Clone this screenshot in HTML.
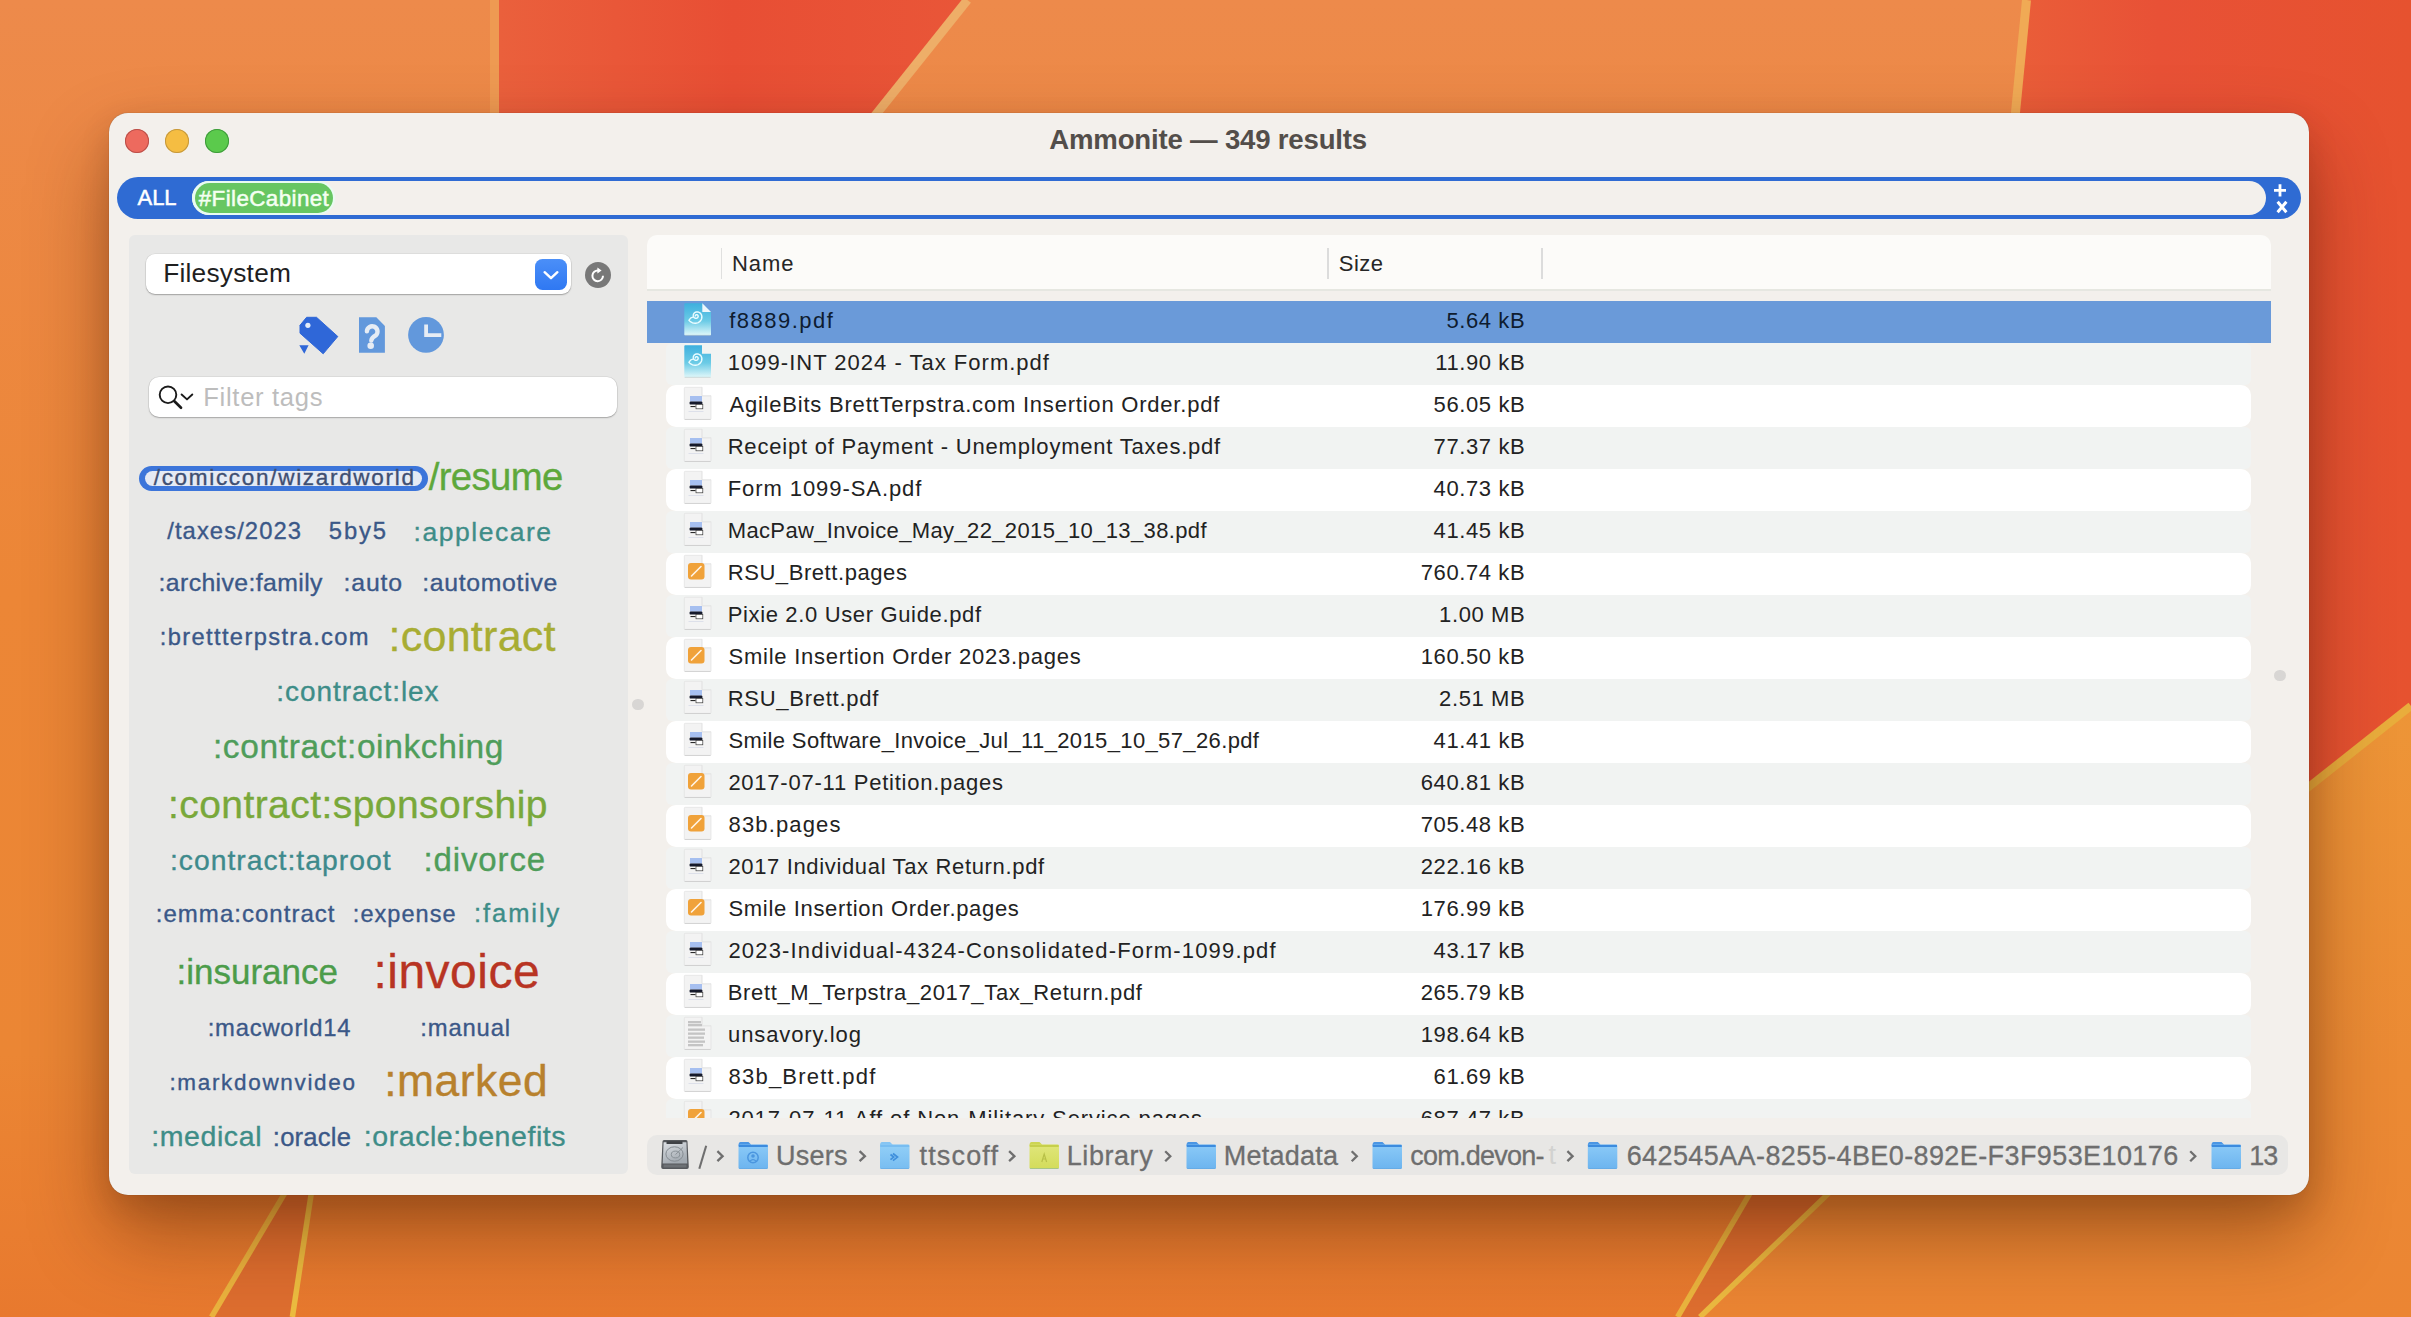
<!DOCTYPE html>
<html><head><meta charset="utf-8">
<style>
html,body{margin:0;padding:0}
html{width:2411px;height:1317px;overflow:hidden}
body{width:2411px;height:1317px;overflow:hidden;position:relative;font-family:"Liberation Sans",sans-serif;background:#ec8a42}
.a{position:absolute}
.t{position:absolute;white-space:pre;line-height:1}
.row{position:absolute}
.ic{position:absolute;overflow:visible}
</style></head><body>
<svg class="a" style="left:0;top:0" width="2411" height="1317" viewBox="0 0 2411 1317">
  <defs>
    <linearGradient id="bgL" x1="0" y1="0" x2="0" y2="1">
      <stop offset="0" stop-color="#ed8a4b"/><stop offset="0.45" stop-color="#ec8636"/><stop offset="0.8" stop-color="#eb8634"/><stop offset="1" stop-color="#e8792e"/>
    </linearGradient>
    <linearGradient id="redT" x1="0" y1="0" x2="1" y2="0">
      <stop offset="0" stop-color="#ea603c"/><stop offset="0.5" stop-color="#e84e34"/><stop offset="1" stop-color="#e95638"/>
    </linearGradient>
    <linearGradient id="redR" x1="0" y1="0" x2="1" y2="0">
      <stop offset="0" stop-color="#ea6039"/><stop offset="0.4" stop-color="#e85136"/><stop offset="1" stop-color="#e6522f"/>
    </linearGradient>
    <linearGradient id="orR" x1="0" y1="0" x2="0" y2="1"><stop offset="0" stop-color="#ed9537"/><stop offset="0.6" stop-color="#eb8a34"/><stop offset="1" stop-color="#eb8533"/></linearGradient>
    <linearGradient id="botG" x1="0" y1="0" x2="0" y2="1">
      <stop offset="0" stop-color="#e98030"/><stop offset="1" stop-color="#ea7e30"/>
    </linearGradient>
  </defs>
  <rect x="0" y="0" width="2411" height="1317" fill="url(#bgL)"/>
  <!-- top red block -->
  <polygon points="499,0 967,0 790,230 499,230" fill="url(#redT)"/>
  <line x1="494.5" y1="0" x2="494.5" y2="230" stroke="#ee9a52" stroke-width="9"/>
  <line x1="967.4" y1="0" x2="790" y2="222" stroke="#eeae68" stroke-width="9"/>
  <!-- right red block -->
  <polygon points="2027,0 2411,0 2411,706 2200,873 1990,873 2012,113" fill="url(#redR)"/>
  <line x1="2026.5" y1="0" x2="2004" y2="230" stroke="#f0aa55" stroke-width="9"/>
  <polygon points="2411,706 2411,1317 1700,1317 1873.6,1150 2200,873" fill="url(#orR)"/>
  <line x1="2411" y1="706" x2="2200" y2="873" stroke="#e9ad3c" stroke-width="8"/>
  <!-- bottom wedges -->
  <polygon points="310.3,1150 317.9,1150 292.4,1317 211.5,1317" fill="#de6e2f"/>
  <line x1="310.3" y1="1150" x2="211.5" y2="1317" stroke="#ebb33e" stroke-width="5.5"/>
  <line x1="317.9" y1="1150" x2="292.4" y2="1317" stroke="#edbd40" stroke-width="5.5"/>
  <polygon points="1775.3,1150 1873.6,1150 1700,1317 1677.6,1317" fill="#de6e2f"/>
  <line x1="1775.3" y1="1150" x2="1677.6" y2="1317" stroke="#ebb53e" stroke-width="5.5"/>
  <line x1="1873.6" y1="1150" x2="1700" y2="1317" stroke="#ecba40" stroke-width="5.5"/>
</svg>
<!-- window shadow and window -->
<div class="a" style="left:109px;top:113px;width:2200px;height:1082px;border-radius:19px;box-shadow:0 40px 80px rgba(70,25,0,0.42),0 12px 30px rgba(70,25,0,0.16),0 0 1px rgba(0,0,0,.45);background:#f3f0ec"></div>

<!-- traffic lights -->
<div class="a" style="left:125px;top:128.7px;width:24px;height:24px;border-radius:50%;background:#ed6a5e;box-shadow:inset 0 0 0 1px #b9504a"></div>
<div class="a" style="left:165px;top:128.7px;width:24px;height:24px;border-radius:50%;background:#f5bd42;box-shadow:inset 0 0 0 1px #c4983e"></div>
<div class="a" style="left:204.8px;top:128.7px;width:24px;height:24px;border-radius:50%;background:#5bca4c;box-shadow:inset 0 0 0 1px #3f9a3c"></div>

<!-- search bar -->
<div class="a" style="left:117px;top:177px;width:2184px;height:42px;border-radius:21px;background:#2f6bd3"></div>
<div class="a" style="left:192px;top:181px;width:2074px;height:34px;border-radius:17px;background:#f3f0ec"></div>
<div class="a" style="left:192px;top:181px;width:143px;height:34px;border-radius:17px;background:#e9fbf2"></div>
<div class="a" style="left:194.5px;top:183px;width:138px;height:30px;border-radius:15px;background:#67c662"></div>
<svg class="a" style="left:2270px;top:182px" width="22" height="34" viewBox="0 0 22 34">
  <path d="M10,2.3 V14.4 M4,8.4 H16" stroke="#fff" stroke-width="2.8"/>
  <path d="M7.6,19.8 L16.4,30.2 M16.4,19.8 L7.6,30.2" stroke="#fff" stroke-width="3"/>
</svg>

<!-- left panel -->
<div class="a" style="left:129px;top:235px;width:499px;height:939px;border-radius:6px;background:#e8e8e7"></div>
<div class="a" style="left:146px;top:254px;width:425px;height:40px;border-radius:9px;background:#ffffff;box-shadow:0 1px 1.5px rgba(0,0,0,0.28),0 0 0 0.5px rgba(0,0,0,0.08)"></div>
<div class="a" style="left:535px;top:259px;width:32px;height:30.5px;border-radius:7.5px;background:linear-gradient(#4b8ff8,#2f78f2)"></div>
<svg class="a" style="left:535px;top:259px" width="32" height="31" viewBox="0 0 32 31">
  <path d="M9.6,13.2 L16,19.2 L22.4,13.2" fill="none" stroke="#fff" stroke-width="2.4" stroke-linecap="round" stroke-linejoin="round"/>
</svg>
<svg class="a" style="left:584px;top:261px" width="28" height="28" viewBox="0 0 28 28">
  <circle cx="14" cy="14" r="13" fill="#787878"/>
  <path d="M19,14.8 A5.3,5.3 0 1 1 14.2,9.6" fill="none" stroke="#fff" stroke-width="2"/>
  <path d="M13.4,6.6 L17.6,9.6 L13.4,12.4 Z" fill="#fff"/>
</svg>
<!-- three icons -->
<svg class="a" style="left:290px;top:308px" width="160" height="54" viewBox="290 308 160 54">
  <path d="M300,325.3 L306.6,317.3 L316.5,317.3 L337.8,336.5 L323.2,353.8 L300,333.2 Z" fill="#2f67d8" stroke="#2f67d8" stroke-width="1" stroke-linejoin="round"/>
  <circle cx="307.9" cy="325.3" r="2.6" fill="#e4ecf8"/>
  <path d="M299.3,345.2 L308.6,345.2 L304.3,353.8 Z" fill="#2f67d8"/>
  <path d="M359,317.3 H376.3 L384.9,325.9 V352.8 H359 Z" fill="#6298dc"/>
  <path d="M366.9,331.3 A5.3,5.3 0 1 1 376,335.2 Q371.6,337.4 371.3,340.6" fill="none" stroke="#e6ecf4" stroke-width="4.4" stroke-linecap="round"/>
  <circle cx="370.7" cy="345.8" r="3.3" fill="#e6ecf4"/>
  <circle cx="426" cy="334.9" r="17.9" fill="#6298dc"/>
  <path d="M426.1,324.6 V335.2 H441.3" fill="none" stroke="#e6ecf4" stroke-width="3.8"/>
</svg>
<!-- filter field -->
<div class="a" style="left:148.5px;top:377px;width:468.5px;height:40px;border-radius:10px;background:#ffffff;box-shadow:0 1px 1.5px rgba(0,0,0,0.25),0 0 0 0.5px rgba(0,0,0,0.1)"></div>
<svg class="a" style="left:150px;top:380px" width="50" height="36" viewBox="150 380 50 36">
  <circle cx="168" cy="394.8" r="8.3" fill="none" stroke="#1a1a1a" stroke-width="1.9"/>
  <path d="M174.4,401.2 L181,407.8" stroke="#1a1a1a" stroke-width="2.7" stroke-linecap="round"/>
  <path d="M181.6,394.5 L187,399.4 L192.3,394.5" fill="none" stroke="#1a1a1a" stroke-width="1.9" stroke-linecap="round" stroke-linejoin="round"/>
</svg>
<!-- wizardworld pill -->
<div class="a" style="left:138.7px;top:465.6px;width:289.3px;height:25.5px;border-radius:13px;background:#3c75da"></div>
<div class="a" style="left:144.5px;top:471px;width:277.5px;height:14.5px;border-radius:8px;background:#e5eaf4"></div>

<!-- split handles -->
<div class="a" style="left:632.3px;top:698.8px;width:11.5px;height:11.5px;border-radius:50%;background:#d8d6d4"></div>
<div class="a" style="left:2274.2px;top:669.8px;width:11.5px;height:11.5px;border-radius:50%;background:#d8d6d4"></div>

<!-- list header -->
<div class="a" style="left:647px;top:235px;width:1624px;height:54px;border-radius:10px 10px 0 0;background:#fcfbf9"></div>
<div class="a" style="left:647px;top:289px;width:1624px;height:2px;background:#e6e7e1"></div>
<div class="a" style="left:720.6px;top:248px;width:1.8px;height:31px;background:#e0e0df"></div>
<div class="a" style="left:1327px;top:248px;width:2px;height:31px;background:#dcdcdc"></div>
<div class="a" style="left:1541px;top:248px;width:2px;height:31px;background:#dcdcdc"></div>

<!-- list rows (clipped) -->
<div class="a" style="left:0;top:0;width:2411px;height:1118px;overflow:hidden">
<div class="row" style="left:647px;top:301px;width:1624px;height:42px;background:#6a9ad9"></div>
<svg class="ic" style="left:683.0px;top:301.9px" width="29" height="35" viewBox="-1 -1 29 35"><defs><linearGradient id="amg302" x1="0" y1="0" x2="0" y2="1"><stop offset="0" stop-color="#3eb0de"/><stop offset="0.55" stop-color="#6ccbe6"/><stop offset="1" stop-color="#e2f8fa"/></linearGradient></defs><path d="M0.3,1.2 Q0.3,0.3 1.2,0.3 H18.3 L27,9 V31.6 Q27,32.5 26.1,32.5 H1.2 Q0.3,32.5 0.3,31.6 Z" fill="url(#amg302)"/><rect x="0.6" y="31.8" width="26" height="1" fill="#000" opacity="0.12"/><path d="M18.3,0.3 L27,9 H18.3 Z" fill="#eef6fb"/><path d="M11.41,12.90 L11.40,12.77 L11.42,12.65 L11.45,12.52 L11.49,12.40 L11.55,12.28 L11.62,12.17 L11.71,12.06 L11.82,11.96 L11.94,11.88 L12.07,11.81 L12.21,11.75 L12.36,11.71 L12.51,11.68 L12.68,11.68 L12.84,11.69 L13.01,11.73 L13.17,11.78 L13.33,11.86 L13.48,11.95 L13.62,12.07 L13.76,12.21 L13.87,12.36 L13.97,12.53 L14.05,12.71 L14.11,12.91 L14.15,13.12 L14.16,13.33 L14.14,13.55 L14.10,13.77 L14.03,13.99 L13.93,14.20 L13.81,14.40 L13.66,14.60 L13.48,14.77 L13.28,14.93 L13.06,15.07 L12.82,15.18 L12.56,15.26 L12.29,15.31 L12.01,15.33 L11.72,15.32 L11.42,15.27 L11.13,15.18 L10.85,15.06 L10.58,14.90 L10.32,14.71 L10.08,14.48 L9.87,14.22 L9.68,13.93 L9.53,13.61 L9.42,13.27 L9.34,12.91 L9.31,12.54 L9.32,12.15 L9.38,11.77 L9.48,11.38 L9.64,11.00 L9.84,10.64 L10.09,10.29 L10.39,9.97 L10.73,9.68 L11.11,9.43 L11.52,9.22 L11.97,9.06 L12.44,8.95 L12.94,8.90 L13.44,8.90 L13.96,8.97 L14.47,9.10 L14.97,9.30 L15.46,9.56 L15.93,9.88 L16.36,10.26 L16.75,10.70 L17.09,11.20 L17.38,11.74 L17.60,12.33 L17.76,12.96 L17.84,13.61 L17.84,14.28 L17.77,14.96 L17.61,15.64 L17.36,16.31 L17.03,16.96 L16.62,17.58 L16.12,18.16 L15.54,18.69 L14.90,19.16 L14.18,19.55 L13.41,19.86 L12.59,20.08 L11.73,20.21 L10.85,20.23 L9.94,20.15 L9.04,19.95 L8.14,19.64 L7.27,19.22 L6.44,18.69 L5.66,18.05 L4.95,17.30 Q6.15,14.50 9.45,13.90" fill="none" stroke="#eafcff" stroke-width="1.45" stroke-linecap="round" stroke-linejoin="round"/></svg>
<div class="row" style="left:666px;top:343px;width:1585px;height:42px;background:#f1f3f2;border-radius:6px"></div>
<svg class="ic" style="left:683.0px;top:343.9px" width="29" height="35" viewBox="-1 -1 29 35"><defs><linearGradient id="amg344" x1="0" y1="0" x2="0" y2="1"><stop offset="0" stop-color="#3eb0de"/><stop offset="0.55" stop-color="#6ccbe6"/><stop offset="1" stop-color="#e2f8fa"/></linearGradient></defs><path d="M0.3,1.2 Q0.3,0.3 1.2,0.3 H18 V8.8 H27 V31.6 Q27,32.5 26.1,32.5 H1.2 Q0.3,32.5 0.3,31.6 Z" fill="url(#amg344)"/><rect x="0.6" y="31.8" width="26" height="1" fill="#000" opacity="0.12"/><path d="M11.41,12.90 L11.40,12.77 L11.42,12.65 L11.45,12.52 L11.49,12.40 L11.55,12.28 L11.62,12.17 L11.71,12.06 L11.82,11.96 L11.94,11.88 L12.07,11.81 L12.21,11.75 L12.36,11.71 L12.51,11.68 L12.68,11.68 L12.84,11.69 L13.01,11.73 L13.17,11.78 L13.33,11.86 L13.48,11.95 L13.62,12.07 L13.76,12.21 L13.87,12.36 L13.97,12.53 L14.05,12.71 L14.11,12.91 L14.15,13.12 L14.16,13.33 L14.14,13.55 L14.10,13.77 L14.03,13.99 L13.93,14.20 L13.81,14.40 L13.66,14.60 L13.48,14.77 L13.28,14.93 L13.06,15.07 L12.82,15.18 L12.56,15.26 L12.29,15.31 L12.01,15.33 L11.72,15.32 L11.42,15.27 L11.13,15.18 L10.85,15.06 L10.58,14.90 L10.32,14.71 L10.08,14.48 L9.87,14.22 L9.68,13.93 L9.53,13.61 L9.42,13.27 L9.34,12.91 L9.31,12.54 L9.32,12.15 L9.38,11.77 L9.48,11.38 L9.64,11.00 L9.84,10.64 L10.09,10.29 L10.39,9.97 L10.73,9.68 L11.11,9.43 L11.52,9.22 L11.97,9.06 L12.44,8.95 L12.94,8.90 L13.44,8.90 L13.96,8.97 L14.47,9.10 L14.97,9.30 L15.46,9.56 L15.93,9.88 L16.36,10.26 L16.75,10.70 L17.09,11.20 L17.38,11.74 L17.60,12.33 L17.76,12.96 L17.84,13.61 L17.84,14.28 L17.77,14.96 L17.61,15.64 L17.36,16.31 L17.03,16.96 L16.62,17.58 L16.12,18.16 L15.54,18.69 L14.90,19.16 L14.18,19.55 L13.41,19.86 L12.59,20.08 L11.73,20.21 L10.85,20.23 L9.94,20.15 L9.04,19.95 L8.14,19.64 L7.27,19.22 L6.44,18.69 L5.66,18.05 L4.95,17.30 Q6.15,14.50 9.45,13.90" fill="none" stroke="#eafcff" stroke-width="1.45" stroke-linecap="round" stroke-linejoin="round"/></svg>
<div class="row" style="left:666px;top:385px;width:1585px;height:42px;background:#ffffff;border-radius:10px"></div>
<svg class="ic" style="left:683.0px;top:385.9px" width="29" height="35" viewBox="-1 -1 29 35"><path d="M0.3,1.2 Q0.3,0.3 1.2,0.3 H18 V8.8 H27 V31.6 Q27,32.5 26.1,32.5 H1.2 Q0.3,32.5 0.3,31.6 Z" fill="#f3f3f3" stroke="#dedede" stroke-width="0.6"/><rect x="0.6" y="31.9" width="26" height="1" fill="#000" opacity="0.10"/><path d="M18,0.3 V8.8 H27" fill="none" stroke="#e4e4e4" stroke-width="0.6"/><rect x="6" y="9" width="12" height="5.6" fill="#a6bff0"/><rect x="5.6" y="14.4" width="12.8" height="3.2" rx="1.2" fill="#15192b"/><rect x="12" y="17.4" width="6.8" height="4.4" fill="#ffffff" stroke="#3a3a3a" stroke-width="0.7"/><rect x="6.5" y="19" width="5" height="1.1" fill="#2a2a2a"/><rect x="4.5" y="24" width="15" height="0.8" fill="#d8dbe8"/></svg>
<div class="row" style="left:666px;top:427px;width:1585px;height:42px;background:#f1f3f2;border-radius:6px"></div>
<svg class="ic" style="left:683.0px;top:427.9px" width="29" height="35" viewBox="-1 -1 29 35"><path d="M0.3,1.2 Q0.3,0.3 1.2,0.3 H18 V8.8 H27 V31.6 Q27,32.5 26.1,32.5 H1.2 Q0.3,32.5 0.3,31.6 Z" fill="#f3f3f3" stroke="#dedede" stroke-width="0.6"/><rect x="0.6" y="31.9" width="26" height="1" fill="#000" opacity="0.10"/><path d="M18,0.3 V8.8 H27" fill="none" stroke="#e4e4e4" stroke-width="0.6"/><rect x="6" y="9" width="12" height="5.6" fill="#a6bff0"/><rect x="5.6" y="14.4" width="12.8" height="3.2" rx="1.2" fill="#15192b"/><rect x="12" y="17.4" width="6.8" height="4.4" fill="#ffffff" stroke="#3a3a3a" stroke-width="0.7"/><rect x="6.5" y="19" width="5" height="1.1" fill="#2a2a2a"/><rect x="4.5" y="24" width="15" height="0.8" fill="#d8dbe8"/></svg>
<div class="row" style="left:666px;top:469px;width:1585px;height:42px;background:#ffffff;border-radius:10px"></div>
<svg class="ic" style="left:683.0px;top:469.9px" width="29" height="35" viewBox="-1 -1 29 35"><path d="M0.3,1.2 Q0.3,0.3 1.2,0.3 H18 V8.8 H27 V31.6 Q27,32.5 26.1,32.5 H1.2 Q0.3,32.5 0.3,31.6 Z" fill="#f3f3f3" stroke="#dedede" stroke-width="0.6"/><rect x="0.6" y="31.9" width="26" height="1" fill="#000" opacity="0.10"/><path d="M18,0.3 V8.8 H27" fill="none" stroke="#e4e4e4" stroke-width="0.6"/><rect x="6" y="9" width="12" height="5.6" fill="#a6bff0"/><rect x="5.6" y="14.4" width="12.8" height="3.2" rx="1.2" fill="#15192b"/><rect x="12" y="17.4" width="6.8" height="4.4" fill="#ffffff" stroke="#3a3a3a" stroke-width="0.7"/><rect x="6.5" y="19" width="5" height="1.1" fill="#2a2a2a"/><rect x="4.5" y="24" width="15" height="0.8" fill="#d8dbe8"/></svg>
<div class="row" style="left:666px;top:511px;width:1585px;height:42px;background:#f1f3f2;border-radius:6px"></div>
<svg class="ic" style="left:683.0px;top:511.9px" width="29" height="35" viewBox="-1 -1 29 35"><path d="M0.3,1.2 Q0.3,0.3 1.2,0.3 H18 V8.8 H27 V31.6 Q27,32.5 26.1,32.5 H1.2 Q0.3,32.5 0.3,31.6 Z" fill="#f3f3f3" stroke="#dedede" stroke-width="0.6"/><rect x="0.6" y="31.9" width="26" height="1" fill="#000" opacity="0.10"/><path d="M18,0.3 V8.8 H27" fill="none" stroke="#e4e4e4" stroke-width="0.6"/><rect x="6" y="9" width="12" height="5.6" fill="#a6bff0"/><rect x="5.6" y="14.4" width="12.8" height="3.2" rx="1.2" fill="#15192b"/><rect x="12" y="17.4" width="6.8" height="4.4" fill="#ffffff" stroke="#3a3a3a" stroke-width="0.7"/><rect x="6.5" y="19" width="5" height="1.1" fill="#2a2a2a"/><rect x="4.5" y="24" width="15" height="0.8" fill="#d8dbe8"/></svg>
<div class="row" style="left:666px;top:553px;width:1585px;height:42px;background:#ffffff;border-radius:10px"></div>
<svg class="ic" style="left:683.0px;top:553.9px" width="29" height="35" viewBox="-1 -1 29 35"><path d="M0.3,1.2 Q0.3,0.3 1.2,0.3 H18 V8.8 H27 V31.6 Q27,32.5 26.1,32.5 H1.2 Q0.3,32.5 0.3,31.6 Z" fill="#f3f3f3" stroke="#dedede" stroke-width="0.6"/><rect x="0.6" y="31.9" width="26" height="1" fill="#000" opacity="0.10"/><path d="M18,0.3 V8.8 H27" fill="none" stroke="#e4e4e4" stroke-width="0.6"/><rect x="4" y="8" width="16.5" height="16.5" rx="3" fill="#f0a23a"/><path d="M7.5,21 L17,11.5" stroke="#fff4e6" stroke-width="1.6" stroke-linecap="round"/></svg>
<div class="row" style="left:666px;top:595px;width:1585px;height:42px;background:#f1f3f2;border-radius:6px"></div>
<svg class="ic" style="left:683.0px;top:595.9px" width="29" height="35" viewBox="-1 -1 29 35"><path d="M0.3,1.2 Q0.3,0.3 1.2,0.3 H18 V8.8 H27 V31.6 Q27,32.5 26.1,32.5 H1.2 Q0.3,32.5 0.3,31.6 Z" fill="#f3f3f3" stroke="#dedede" stroke-width="0.6"/><rect x="0.6" y="31.9" width="26" height="1" fill="#000" opacity="0.10"/><path d="M18,0.3 V8.8 H27" fill="none" stroke="#e4e4e4" stroke-width="0.6"/><rect x="6" y="9" width="12" height="5.6" fill="#a6bff0"/><rect x="5.6" y="14.4" width="12.8" height="3.2" rx="1.2" fill="#15192b"/><rect x="12" y="17.4" width="6.8" height="4.4" fill="#ffffff" stroke="#3a3a3a" stroke-width="0.7"/><rect x="6.5" y="19" width="5" height="1.1" fill="#2a2a2a"/><rect x="4.5" y="24" width="15" height="0.8" fill="#d8dbe8"/></svg>
<div class="row" style="left:666px;top:637px;width:1585px;height:42px;background:#ffffff;border-radius:10px"></div>
<svg class="ic" style="left:683.0px;top:637.9px" width="29" height="35" viewBox="-1 -1 29 35"><path d="M0.3,1.2 Q0.3,0.3 1.2,0.3 H18 V8.8 H27 V31.6 Q27,32.5 26.1,32.5 H1.2 Q0.3,32.5 0.3,31.6 Z" fill="#f3f3f3" stroke="#dedede" stroke-width="0.6"/><rect x="0.6" y="31.9" width="26" height="1" fill="#000" opacity="0.10"/><path d="M18,0.3 V8.8 H27" fill="none" stroke="#e4e4e4" stroke-width="0.6"/><rect x="4" y="8" width="16.5" height="16.5" rx="3" fill="#f0a23a"/><path d="M7.5,21 L17,11.5" stroke="#fff4e6" stroke-width="1.6" stroke-linecap="round"/></svg>
<div class="row" style="left:666px;top:679px;width:1585px;height:42px;background:#f1f3f2;border-radius:6px"></div>
<svg class="ic" style="left:683.0px;top:679.9px" width="29" height="35" viewBox="-1 -1 29 35"><path d="M0.3,1.2 Q0.3,0.3 1.2,0.3 H18 V8.8 H27 V31.6 Q27,32.5 26.1,32.5 H1.2 Q0.3,32.5 0.3,31.6 Z" fill="#f3f3f3" stroke="#dedede" stroke-width="0.6"/><rect x="0.6" y="31.9" width="26" height="1" fill="#000" opacity="0.10"/><path d="M18,0.3 V8.8 H27" fill="none" stroke="#e4e4e4" stroke-width="0.6"/><rect x="6" y="9" width="12" height="5.6" fill="#a6bff0"/><rect x="5.6" y="14.4" width="12.8" height="3.2" rx="1.2" fill="#15192b"/><rect x="12" y="17.4" width="6.8" height="4.4" fill="#ffffff" stroke="#3a3a3a" stroke-width="0.7"/><rect x="6.5" y="19" width="5" height="1.1" fill="#2a2a2a"/><rect x="4.5" y="24" width="15" height="0.8" fill="#d8dbe8"/></svg>
<div class="row" style="left:666px;top:721px;width:1585px;height:42px;background:#ffffff;border-radius:10px"></div>
<svg class="ic" style="left:683.0px;top:721.9px" width="29" height="35" viewBox="-1 -1 29 35"><path d="M0.3,1.2 Q0.3,0.3 1.2,0.3 H18 V8.8 H27 V31.6 Q27,32.5 26.1,32.5 H1.2 Q0.3,32.5 0.3,31.6 Z" fill="#f3f3f3" stroke="#dedede" stroke-width="0.6"/><rect x="0.6" y="31.9" width="26" height="1" fill="#000" opacity="0.10"/><path d="M18,0.3 V8.8 H27" fill="none" stroke="#e4e4e4" stroke-width="0.6"/><rect x="6" y="9" width="12" height="5.6" fill="#a6bff0"/><rect x="5.6" y="14.4" width="12.8" height="3.2" rx="1.2" fill="#15192b"/><rect x="12" y="17.4" width="6.8" height="4.4" fill="#ffffff" stroke="#3a3a3a" stroke-width="0.7"/><rect x="6.5" y="19" width="5" height="1.1" fill="#2a2a2a"/><rect x="4.5" y="24" width="15" height="0.8" fill="#d8dbe8"/></svg>
<div class="row" style="left:666px;top:763px;width:1585px;height:42px;background:#f1f3f2;border-radius:6px"></div>
<svg class="ic" style="left:683.0px;top:763.9px" width="29" height="35" viewBox="-1 -1 29 35"><path d="M0.3,1.2 Q0.3,0.3 1.2,0.3 H18 V8.8 H27 V31.6 Q27,32.5 26.1,32.5 H1.2 Q0.3,32.5 0.3,31.6 Z" fill="#f3f3f3" stroke="#dedede" stroke-width="0.6"/><rect x="0.6" y="31.9" width="26" height="1" fill="#000" opacity="0.10"/><path d="M18,0.3 V8.8 H27" fill="none" stroke="#e4e4e4" stroke-width="0.6"/><rect x="4" y="8" width="16.5" height="16.5" rx="3" fill="#f0a23a"/><path d="M7.5,21 L17,11.5" stroke="#fff4e6" stroke-width="1.6" stroke-linecap="round"/></svg>
<div class="row" style="left:666px;top:805px;width:1585px;height:42px;background:#ffffff;border-radius:10px"></div>
<svg class="ic" style="left:683.0px;top:805.9px" width="29" height="35" viewBox="-1 -1 29 35"><path d="M0.3,1.2 Q0.3,0.3 1.2,0.3 H18 V8.8 H27 V31.6 Q27,32.5 26.1,32.5 H1.2 Q0.3,32.5 0.3,31.6 Z" fill="#f3f3f3" stroke="#dedede" stroke-width="0.6"/><rect x="0.6" y="31.9" width="26" height="1" fill="#000" opacity="0.10"/><path d="M18,0.3 V8.8 H27" fill="none" stroke="#e4e4e4" stroke-width="0.6"/><rect x="4" y="8" width="16.5" height="16.5" rx="3" fill="#f0a23a"/><path d="M7.5,21 L17,11.5" stroke="#fff4e6" stroke-width="1.6" stroke-linecap="round"/></svg>
<div class="row" style="left:666px;top:847px;width:1585px;height:42px;background:#f1f3f2;border-radius:6px"></div>
<svg class="ic" style="left:683.0px;top:847.9px" width="29" height="35" viewBox="-1 -1 29 35"><path d="M0.3,1.2 Q0.3,0.3 1.2,0.3 H18 V8.8 H27 V31.6 Q27,32.5 26.1,32.5 H1.2 Q0.3,32.5 0.3,31.6 Z" fill="#f3f3f3" stroke="#dedede" stroke-width="0.6"/><rect x="0.6" y="31.9" width="26" height="1" fill="#000" opacity="0.10"/><path d="M18,0.3 V8.8 H27" fill="none" stroke="#e4e4e4" stroke-width="0.6"/><rect x="6" y="9" width="12" height="5.6" fill="#a6bff0"/><rect x="5.6" y="14.4" width="12.8" height="3.2" rx="1.2" fill="#15192b"/><rect x="12" y="17.4" width="6.8" height="4.4" fill="#ffffff" stroke="#3a3a3a" stroke-width="0.7"/><rect x="6.5" y="19" width="5" height="1.1" fill="#2a2a2a"/><rect x="4.5" y="24" width="15" height="0.8" fill="#d8dbe8"/></svg>
<div class="row" style="left:666px;top:889px;width:1585px;height:42px;background:#ffffff;border-radius:10px"></div>
<svg class="ic" style="left:683.0px;top:889.9px" width="29" height="35" viewBox="-1 -1 29 35"><path d="M0.3,1.2 Q0.3,0.3 1.2,0.3 H18 V8.8 H27 V31.6 Q27,32.5 26.1,32.5 H1.2 Q0.3,32.5 0.3,31.6 Z" fill="#f3f3f3" stroke="#dedede" stroke-width="0.6"/><rect x="0.6" y="31.9" width="26" height="1" fill="#000" opacity="0.10"/><path d="M18,0.3 V8.8 H27" fill="none" stroke="#e4e4e4" stroke-width="0.6"/><rect x="4" y="8" width="16.5" height="16.5" rx="3" fill="#f0a23a"/><path d="M7.5,21 L17,11.5" stroke="#fff4e6" stroke-width="1.6" stroke-linecap="round"/></svg>
<div class="row" style="left:666px;top:931px;width:1585px;height:42px;background:#f1f3f2;border-radius:6px"></div>
<svg class="ic" style="left:683.0px;top:931.9px" width="29" height="35" viewBox="-1 -1 29 35"><path d="M0.3,1.2 Q0.3,0.3 1.2,0.3 H18 V8.8 H27 V31.6 Q27,32.5 26.1,32.5 H1.2 Q0.3,32.5 0.3,31.6 Z" fill="#f3f3f3" stroke="#dedede" stroke-width="0.6"/><rect x="0.6" y="31.9" width="26" height="1" fill="#000" opacity="0.10"/><path d="M18,0.3 V8.8 H27" fill="none" stroke="#e4e4e4" stroke-width="0.6"/><rect x="6" y="9" width="12" height="5.6" fill="#a6bff0"/><rect x="5.6" y="14.4" width="12.8" height="3.2" rx="1.2" fill="#15192b"/><rect x="12" y="17.4" width="6.8" height="4.4" fill="#ffffff" stroke="#3a3a3a" stroke-width="0.7"/><rect x="6.5" y="19" width="5" height="1.1" fill="#2a2a2a"/><rect x="4.5" y="24" width="15" height="0.8" fill="#d8dbe8"/></svg>
<div class="row" style="left:666px;top:973px;width:1585px;height:42px;background:#ffffff;border-radius:10px"></div>
<svg class="ic" style="left:683.0px;top:973.9px" width="29" height="35" viewBox="-1 -1 29 35"><path d="M0.3,1.2 Q0.3,0.3 1.2,0.3 H18 V8.8 H27 V31.6 Q27,32.5 26.1,32.5 H1.2 Q0.3,32.5 0.3,31.6 Z" fill="#f3f3f3" stroke="#dedede" stroke-width="0.6"/><rect x="0.6" y="31.9" width="26" height="1" fill="#000" opacity="0.10"/><path d="M18,0.3 V8.8 H27" fill="none" stroke="#e4e4e4" stroke-width="0.6"/><rect x="6" y="9" width="12" height="5.6" fill="#a6bff0"/><rect x="5.6" y="14.4" width="12.8" height="3.2" rx="1.2" fill="#15192b"/><rect x="12" y="17.4" width="6.8" height="4.4" fill="#ffffff" stroke="#3a3a3a" stroke-width="0.7"/><rect x="6.5" y="19" width="5" height="1.1" fill="#2a2a2a"/><rect x="4.5" y="24" width="15" height="0.8" fill="#d8dbe8"/></svg>
<div class="row" style="left:666px;top:1015px;width:1585px;height:42px;background:#f1f3f2;border-radius:6px"></div>
<svg class="ic" style="left:683.0px;top:1015.9px" width="29" height="35" viewBox="-1 -1 29 35"><path d="M0.3,1.2 Q0.3,0.3 1.2,0.3 H18 V8.8 H27 V31.6 Q27,32.5 26.1,32.5 H1.2 Q0.3,32.5 0.3,31.6 Z" fill="#f3f3f3" stroke="#dedede" stroke-width="0.6"/><rect x="0.6" y="31.9" width="26" height="1" fill="#000" opacity="0.10"/><path d="M18,0.3 V8.8 H27" fill="none" stroke="#e4e4e4" stroke-width="0.6"/><g fill="#c4c4c4"><rect x="4" y="4.0" width="13" height="2.3"/><rect x="4" y="7.0" width="14" height="2.3"/><rect x="4" y="11.5" width="17" height="2.3"/><rect x="4" y="15.5" width="17" height="2.3"/><rect x="4" y="19.5" width="16" height="2.3"/><rect x="4" y="23.5" width="17" height="2.3"/><rect x="4" y="27.0" width="15" height="2.3"/></g></svg>
<div class="row" style="left:666px;top:1057px;width:1585px;height:42px;background:#ffffff;border-radius:10px"></div>
<svg class="ic" style="left:683.0px;top:1057.9px" width="29" height="35" viewBox="-1 -1 29 35"><path d="M0.3,1.2 Q0.3,0.3 1.2,0.3 H18 V8.8 H27 V31.6 Q27,32.5 26.1,32.5 H1.2 Q0.3,32.5 0.3,31.6 Z" fill="#f3f3f3" stroke="#dedede" stroke-width="0.6"/><rect x="0.6" y="31.9" width="26" height="1" fill="#000" opacity="0.10"/><path d="M18,0.3 V8.8 H27" fill="none" stroke="#e4e4e4" stroke-width="0.6"/><rect x="6" y="9" width="12" height="5.6" fill="#a6bff0"/><rect x="5.6" y="14.4" width="12.8" height="3.2" rx="1.2" fill="#15192b"/><rect x="12" y="17.4" width="6.8" height="4.4" fill="#ffffff" stroke="#3a3a3a" stroke-width="0.7"/><rect x="6.5" y="19" width="5" height="1.1" fill="#2a2a2a"/><rect x="4.5" y="24" width="15" height="0.8" fill="#d8dbe8"/></svg>
<div class="row" style="left:666px;top:1099px;width:1585px;height:42px;background:#f1f3f2;border-radius:6px"></div>
<svg class="ic" style="left:683.0px;top:1099.9px" width="29" height="35" viewBox="-1 -1 29 35"><path d="M0.3,1.2 Q0.3,0.3 1.2,0.3 H18 V8.8 H27 V31.6 Q27,32.5 26.1,32.5 H1.2 Q0.3,32.5 0.3,31.6 Z" fill="#f3f3f3" stroke="#dedede" stroke-width="0.6"/><rect x="0.6" y="31.9" width="26" height="1" fill="#000" opacity="0.10"/><path d="M18,0.3 V8.8 H27" fill="none" stroke="#e4e4e4" stroke-width="0.6"/><rect x="4" y="8" width="16.5" height="16.5" rx="3" fill="#f0a23a"/><path d="M7.5,21 L17,11.5" stroke="#fff4e6" stroke-width="1.6" stroke-linecap="round"/></svg>
<div class="t" style="left:729.19px;top:309.80px;font-size:22.00px;letter-spacing:1.479px;color:#0e1c30;">f8889.pdf</div>
<div class="t" style="left:1446.45px;top:309.80px;font-size:22.00px;letter-spacing:0.600px;color:#0e1c30;">5.64 kB</div>
<div class="t" style="left:727.82px;top:351.80px;font-size:22.00px;letter-spacing:1.009px;color:#222222;">1099-INT 2024 - Tax Form.pdf</div>
<div class="t" style="left:1435.24px;top:351.80px;font-size:22.00px;letter-spacing:0.600px;color:#222222;">11.90 kB</div>
<div class="t" style="left:729.46px;top:393.80px;font-size:22.00px;letter-spacing:0.788px;color:#222222;">AgileBits BrettTerpstra.com Insertion Order.pdf</div>
<div class="t" style="left:1433.62px;top:393.80px;font-size:22.00px;letter-spacing:0.600px;color:#222222;">56.05 kB</div>
<div class="t" style="left:727.70px;top:435.80px;font-size:22.00px;letter-spacing:0.790px;color:#222222;">Receipt of Payment - Unemployment Taxes.pdf</div>
<div class="t" style="left:1433.62px;top:435.80px;font-size:22.00px;letter-spacing:0.600px;color:#222222;">77.37 kB</div>
<div class="t" style="left:727.70px;top:477.80px;font-size:22.00px;letter-spacing:0.928px;color:#222222;">Form 1099-SA.pdf</div>
<div class="t" style="left:1433.62px;top:477.80px;font-size:22.00px;letter-spacing:0.600px;color:#222222;">40.73 kB</div>
<div class="t" style="left:727.70px;top:519.80px;font-size:22.00px;letter-spacing:0.370px;color:#222222;">MacPaw_Invoice_May_22_2015_10_13_38.pdf</div>
<div class="t" style="left:1433.62px;top:519.80px;font-size:22.00px;letter-spacing:0.600px;color:#222222;">41.45 kB</div>
<div class="t" style="left:727.70px;top:561.80px;font-size:22.00px;letter-spacing:0.571px;color:#222222;">RSU_Brett.pages</div>
<div class="t" style="left:1420.78px;top:561.80px;font-size:22.00px;letter-spacing:0.600px;color:#222222;">760.74 kB</div>
<div class="t" style="left:727.70px;top:603.80px;font-size:22.00px;letter-spacing:0.648px;color:#222222;">Pixie 2.0 User Guide.pdf</div>
<div class="t" style="left:1439.12px;top:603.80px;font-size:22.00px;letter-spacing:0.600px;color:#222222;">1.00 MB</div>
<div class="t" style="left:728.50px;top:645.80px;font-size:22.00px;letter-spacing:0.752px;color:#222222;">Smile Insertion Order 2023.pages</div>
<div class="t" style="left:1420.78px;top:645.80px;font-size:22.00px;letter-spacing:0.600px;color:#222222;">160.50 kB</div>
<div class="t" style="left:727.70px;top:687.80px;font-size:22.00px;letter-spacing:0.736px;color:#222222;">RSU_Brett.pdf</div>
<div class="t" style="left:1439.12px;top:687.80px;font-size:22.00px;letter-spacing:0.600px;color:#222222;">2.51 MB</div>
<div class="t" style="left:728.50px;top:729.80px;font-size:22.00px;letter-spacing:0.373px;color:#222222;">Smile Software_Invoice_Jul_11_2015_10_57_26.pdf</div>
<div class="t" style="left:1433.62px;top:729.80px;font-size:22.00px;letter-spacing:0.600px;color:#222222;">41.41 kB</div>
<div class="t" style="left:728.39px;top:771.80px;font-size:22.00px;letter-spacing:0.760px;color:#222222;">2017-07-11 Petition.pages</div>
<div class="t" style="left:1420.78px;top:771.80px;font-size:22.00px;letter-spacing:0.600px;color:#222222;">640.81 kB</div>
<div class="t" style="left:728.54px;top:813.80px;font-size:22.00px;letter-spacing:1.148px;color:#222222;">83b.pages</div>
<div class="t" style="left:1420.78px;top:813.80px;font-size:22.00px;letter-spacing:0.600px;color:#222222;">705.48 kB</div>
<div class="t" style="left:728.39px;top:855.80px;font-size:22.00px;letter-spacing:0.654px;color:#222222;">2017 Individual Tax Return.pdf</div>
<div class="t" style="left:1420.78px;top:855.80px;font-size:22.00px;letter-spacing:0.600px;color:#222222;">222.16 kB</div>
<div class="t" style="left:728.50px;top:897.80px;font-size:22.00px;letter-spacing:0.680px;color:#222222;">Smile Insertion Order.pages</div>
<div class="t" style="left:1420.78px;top:897.80px;font-size:22.00px;letter-spacing:0.600px;color:#222222;">176.99 kB</div>
<div class="t" style="left:728.39px;top:939.80px;font-size:22.00px;letter-spacing:1.183px;color:#222222;">2023-Individual-4324-Consolidated-Form-1099.pdf</div>
<div class="t" style="left:1433.62px;top:939.80px;font-size:22.00px;letter-spacing:0.600px;color:#222222;">43.17 kB</div>
<div class="t" style="left:727.70px;top:981.80px;font-size:22.00px;letter-spacing:0.655px;color:#222222;">Brett_M_Terpstra_2017_Tax_Return.pdf</div>
<div class="t" style="left:1420.78px;top:981.80px;font-size:22.00px;letter-spacing:0.600px;color:#222222;">265.79 kB</div>
<div class="t" style="left:728.07px;top:1023.80px;font-size:22.00px;letter-spacing:0.885px;color:#222222;">unsavory.log</div>
<div class="t" style="left:1420.78px;top:1023.80px;font-size:22.00px;letter-spacing:0.600px;color:#222222;">198.64 kB</div>
<div class="t" style="left:728.54px;top:1065.80px;font-size:22.00px;letter-spacing:1.218px;color:#222222;">83b_Brett.pdf</div>
<div class="t" style="left:1433.62px;top:1065.80px;font-size:22.00px;letter-spacing:0.600px;color:#222222;">61.69 kB</div>
<div class="t" style="left:728.39px;top:1107.80px;font-size:22.00px;letter-spacing:0.883px;color:#222222;">2017-07-11 Aff of Non-Military Service.pages</div>
<div class="t" style="left:1420.78px;top:1107.80px;font-size:22.00px;letter-spacing:0.600px;color:#222222;">687.47 kB</div>
</div>

<!-- path bar -->
<div class="a" style="left:647px;top:1135px;width:1641px;height:40px;border-radius:10px;background:#e8e7e5"></div>
<svg class="a" style="left:0;top:0" width="2411" height="1317" viewBox="0 0 2411 1317"><defs><linearGradient id="dk" x1="0" y1="0" x2="0.4" y2="1"><stop offset="0" stop-color="#dde1e5"/><stop offset="1" stop-color="#a3aab1"/></linearGradient></defs><path d="M662.5,1141.5 Q662.5,1140 664,1140 H686 Q687.5,1140 687.5,1141.5 L688.8,1167 Q688.8,1169 687,1169 H663 Q661.2,1169 661.2,1167 Z" fill="#56595d"/><path d="M663.6,1142.3 H686.4 L687.3,1163.5 H662.7 Z" fill="url(#dk)"/><rect x="666.5" y="1141.2" width="16" height="2.8" rx="0.6" fill="#3f4246"/><ellipse cx="674.5" cy="1154" rx="8.6" ry="7.2" fill="none" stroke="#858c92" stroke-width="1"/><ellipse cx="675.5" cy="1154.5" rx="4.2" ry="3.4" fill="none" stroke="#858c92" stroke-width="0.9"/><path d="M675.5,1154.5 L683,1147.5" stroke="#858c92" stroke-width="0.9"/><rect x="663.5" y="1164.5" width="23" height="3" fill="#6d7175"/><path d="M706.2,1145.8 L699.3,1168.8" stroke="#6f6f6f" stroke-width="2.1"/><path d="M717.4,1151.2 L722.6,1156.2 L717.4,1161.2" fill="none" stroke="#6f6f6f" stroke-width="2.3" stroke-linejoin="miter"/><linearGradient id="fg738" x1="0" y1="0" x2="0" y2="1"><stop offset="0" stop-color="#8bcaf7"/><stop offset="1" stop-color="#6cb4ef"/></linearGradient><path d="M738.5,1145.5 Q738.5,1142.0 740.5,1142.0 H748.5 L751.0,1144.5 V1146.0 H738.5 Z" fill="#4a96e4"/><rect x="738.5" y="1144.5" width="29.5" height="24.5" rx="1.6" fill="url(#fg738)"/><rect x="738.8" y="1144.8" width="28.9" height="2.2" fill="#3c8bde"/><rect x="739.0" y="1168.0" width="28.5" height="1" fill="#5a9ad8" opacity="0.35"/><circle cx="753.0" cy="1157.5" r="5.2" fill="none" stroke="#4b96df" stroke-width="1.5"/><circle cx="753.0" cy="1156.0" r="1.8" fill="#4b96df"/><path d="M750.0,1161.2 q3,-3.2 6,0" fill="none" stroke="#4b96df" stroke-width="1.4"/><path d="M859.6,1151.2 L864.9,1156.2 L859.6,1161.2" fill="none" stroke="#6f6f6f" stroke-width="2.3" stroke-linejoin="miter"/><linearGradient id="fg880" x1="0" y1="0" x2="0" y2="1"><stop offset="0" stop-color="#92cff7"/><stop offset="1" stop-color="#78bdf1"/></linearGradient><path d="M880.0,1145.5 Q880.0,1142.0 882.0,1142.0 H890.0 L892.5,1144.5 V1146.0 H880.0 Z" fill="#86c5f3"/><rect x="880.0" y="1144.5" width="29.5" height="24.5" rx="1.6" fill="url(#fg880)"/><rect x="880.3" y="1144.8" width="28.9" height="2.2" fill="#78bdf1"/><rect x="880.5" y="1168.0" width="28.5" height="1" fill="#5a9ad8" opacity="0.35"/><path d="M893.0,1153.5 l4.5,3.6 l-4.5,3.6 M890.5,1154.5 l3.2,2.6 l-3.2,2.6" fill="none" stroke="#3f8fdc" stroke-width="1.7"/><path d="M1009.1,1151.2 L1014.4,1156.2 L1009.1,1161.2" fill="none" stroke="#6f6f6f" stroke-width="2.3" stroke-linejoin="miter"/><linearGradient id="fg1029" x1="0" y1="0" x2="0" y2="1"><stop offset="0" stop-color="#e0e67a"/><stop offset="1" stop-color="#d3dc5a"/></linearGradient><path d="M1029.5,1145.5 Q1029.5,1142.0 1031.5,1142.0 H1039.5 L1042.0,1144.5 V1146.0 H1029.5 Z" fill="#cdd552"/><rect x="1029.5" y="1144.5" width="29.5" height="24.5" rx="1.6" fill="url(#fg1029)"/><rect x="1029.8" y="1144.8" width="28.9" height="2.2" fill="#c6cf4c"/><rect x="1030.0" y="1168.0" width="28.5" height="1" fill="#5a9ad8" opacity="0.35"/><path d="M1041.8,1162.0 l2.4,-8 l2.4,8 M1042.6,1159.0 h3.2" fill="none" stroke="#b8c048" stroke-width="1.2"/><path d="M1165.2,1151.2 L1170.3,1156.2 L1165.2,1161.2" fill="none" stroke="#6f6f6f" stroke-width="2.3" stroke-linejoin="miter"/><linearGradient id="fg1186" x1="0" y1="0" x2="0" y2="1"><stop offset="0" stop-color="#8bcaf7"/><stop offset="1" stop-color="#6cb4ef"/></linearGradient><path d="M1186.5,1145.5 Q1186.5,1142.0 1188.5,1142.0 H1196.5 L1199.0,1144.5 V1146.0 H1186.5 Z" fill="#4a96e4"/><rect x="1186.5" y="1144.5" width="29.5" height="24.5" rx="1.6" fill="url(#fg1186)"/><rect x="1186.8" y="1144.8" width="28.9" height="2.2" fill="#3c8bde"/><rect x="1187.0" y="1168.0" width="28.5" height="1" fill="#5a9ad8" opacity="0.35"/><path d="M1351.7,1151.2 L1356.8,1156.2 L1351.7,1161.2" fill="none" stroke="#6f6f6f" stroke-width="2.3" stroke-linejoin="miter"/><linearGradient id="fg1372" x1="0" y1="0" x2="0" y2="1"><stop offset="0" stop-color="#8bcaf7"/><stop offset="1" stop-color="#6cb4ef"/></linearGradient><path d="M1372.5,1145.5 Q1372.5,1142.0 1374.5,1142.0 H1382.5 L1385.0,1144.5 V1146.0 H1372.5 Z" fill="#4a96e4"/><rect x="1372.5" y="1144.5" width="29.5" height="24.5" rx="1.6" fill="url(#fg1372)"/><rect x="1372.8" y="1144.8" width="28.9" height="2.2" fill="#3c8bde"/><rect x="1373.0" y="1168.0" width="28.5" height="1" fill="#5a9ad8" opacity="0.35"/><path d="M1567.4,1151.2 L1572.6,1156.2 L1567.4,1161.2" fill="none" stroke="#6f6f6f" stroke-width="2.3" stroke-linejoin="miter"/><linearGradient id="fg1587" x1="0" y1="0" x2="0" y2="1"><stop offset="0" stop-color="#8bcaf7"/><stop offset="1" stop-color="#6cb4ef"/></linearGradient><path d="M1587.8,1145.5 Q1587.8,1142.0 1589.8,1142.0 H1597.8 L1600.3,1144.5 V1146.0 H1587.8 Z" fill="#4a96e4"/><rect x="1587.8" y="1144.5" width="29.5" height="24.5" rx="1.6" fill="url(#fg1587)"/><rect x="1588.1" y="1144.8" width="28.9" height="2.2" fill="#3c8bde"/><rect x="1588.3" y="1168.0" width="28.5" height="1" fill="#5a9ad8" opacity="0.35"/><path d="M2190.2,1151.2 L2195.3,1156.2 L2190.2,1161.2" fill="none" stroke="#6f6f6f" stroke-width="2.3" stroke-linejoin="miter"/><linearGradient id="fg2211" x1="0" y1="0" x2="0" y2="1"><stop offset="0" stop-color="#8bcaf7"/><stop offset="1" stop-color="#6cb4ef"/></linearGradient><path d="M2211.5,1145.5 Q2211.5,1142.0 2213.5,1142.0 H2221.5 L2224.0,1144.5 V1146.0 H2211.5 Z" fill="#4a96e4"/><rect x="2211.5" y="1144.5" width="29.5" height="24.5" rx="1.6" fill="url(#fg2211)"/><rect x="2211.8" y="1144.8" width="28.9" height="2.2" fill="#3c8bde"/><rect x="2212.0" y="1168.0" width="28.5" height="1" fill="#5a9ad8" opacity="0.35"/></svg>
<div class="t" style="left:1049.31px;top:125.70px;font-size:27.60px;letter-spacing:-0.201px;color:#534e4a;font-weight:bold;">Ammonite — 349 results</div>
<div class="t" style="left:137.56px;top:186.70px;font-size:22.00px;letter-spacing:-0.091px;color:#ffffff;-webkit-text-stroke:0.5px #ffffff;">ALL</div>
<div class="t" style="left:198.70px;top:187.50px;font-size:22.40px;letter-spacing:0.404px;color:#f4fff2;-webkit-text-stroke:0.5px #f4fff2;">#FileCabinet</div>
<div class="t" style="left:163.14px;top:259.95px;font-size:26.30px;letter-spacing:0.237px;color:#1f1f1f;">Filesystem</div>
<div class="t" style="left:203.30px;top:384.70px;font-size:25.60px;letter-spacing:0.685px;color:#bdbdbd;">Filter tags</div>
<div class="t" style="left:153.70px;top:466.75px;font-size:22.50px;letter-spacing:1.696px;color:#3f4f72;-webkit-text-stroke:0.35px #3f4f72;">/comiccon/wizardworld</div>
<div class="t" style="left:428.70px;top:458.15px;font-size:38.30px;letter-spacing:-0.624px;color:#5ea83b;-webkit-text-stroke:0.35px #5ea83b;">/resume</div>
<div class="t" style="left:167.20px;top:519.40px;font-size:23.80px;letter-spacing:1.080px;color:#3b5888;-webkit-text-stroke:0.35px #3b5888;">/taxes/2023</div>
<div class="t" style="left:328.85px;top:519.40px;font-size:23.80px;letter-spacing:1.881px;color:#3b5888;-webkit-text-stroke:0.35px #3b5888;">5by5</div>
<div class="t" style="left:413.58px;top:518.55px;font-size:26.50px;letter-spacing:1.526px;color:#3e8d88;-webkit-text-stroke:0.35px #3e8d88;">:applecare</div>
<div class="t" style="left:158.54px;top:570.80px;font-size:24.80px;letter-spacing:0.389px;color:#3b5888;-webkit-text-stroke:0.35px #3b5888;">:archive:family</div>
<div class="t" style="left:343.54px;top:570.80px;font-size:24.80px;letter-spacing:0.837px;color:#3b5888;-webkit-text-stroke:0.35px #3b5888;">:auto</div>
<div class="t" style="left:422.14px;top:570.80px;font-size:24.80px;letter-spacing:0.698px;color:#3b5888;-webkit-text-stroke:0.35px #3b5888;">:automotive</div>
<div class="t" style="left:159.74px;top:626.35px;font-size:23.70px;letter-spacing:1.365px;color:#3b5888;-webkit-text-stroke:0.35px #3b5888;">:brettterpstra.com</div>
<div class="t" style="left:388.57px;top:615.30px;font-size:43.00px;letter-spacing:0.254px;color:#a8ad33;-webkit-text-stroke:0.35px #a8ad33;">:contract</div>
<div class="t" style="left:276.24px;top:677.80px;font-size:28.00px;letter-spacing:0.950px;color:#3e8d88;-webkit-text-stroke:0.35px #3e8d88;">:contract:lex</div>
<div class="t" style="left:212.94px;top:730.45px;font-size:33.50px;letter-spacing:0.616px;color:#4f9d5a;-webkit-text-stroke:0.35px #4f9d5a;">:contract:oinkching</div>
<div class="t" style="left:167.94px;top:785.00px;font-size:39.00px;letter-spacing:0.440px;color:#79a83a;-webkit-text-stroke:0.35px #79a83a;">:contract:sponsorship</div>
<div class="t" style="left:169.92px;top:846.45px;font-size:28.30px;letter-spacing:1.007px;color:#3e8a8c;-webkit-text-stroke:0.35px #3e8a8c;">:contract:taproot</div>
<div class="t" style="left:423.49px;top:842.60px;font-size:33.00px;letter-spacing:0.874px;color:#4f9d5a;-webkit-text-stroke:0.35px #4f9d5a;">:divorce</div>
<div class="t" style="left:155.81px;top:901.90px;font-size:24.00px;letter-spacing:1.021px;color:#3b5888;-webkit-text-stroke:0.35px #3b5888;">:emma:contract</div>
<div class="t" style="left:352.85px;top:902.65px;font-size:23.50px;letter-spacing:1.043px;color:#3b5888;-webkit-text-stroke:0.35px #3b5888;">:expense</div>
<div class="t" style="left:473.97px;top:900.85px;font-size:25.50px;letter-spacing:1.948px;color:#3e8d88;-webkit-text-stroke:0.35px #3e8d88;">:family</div>
<div class="t" style="left:176.60px;top:954.30px;font-size:35.00px;letter-spacing:-0.026px;color:#4c9c4a;-webkit-text-stroke:0.35px #4c9c4a;">:insurance</div>
<div class="t" style="left:373.42px;top:948.20px;font-size:48.00px;letter-spacing:0.495px;color:#b83423;-webkit-text-stroke:0.35px #b83423;">:invoice</div>
<div class="t" style="left:207.63px;top:1015.60px;font-size:23.80px;letter-spacing:0.796px;color:#3b5888;-webkit-text-stroke:0.35px #3b5888;">:macworld14</div>
<div class="t" style="left:420.23px;top:1015.60px;font-size:23.80px;letter-spacing:0.866px;color:#3b5888;-webkit-text-stroke:0.35px #3b5888;">:manual</div>
<div class="t" style="left:169.45px;top:1071.95px;font-size:22.50px;letter-spacing:1.667px;color:#3b5888;-webkit-text-stroke:0.35px #3b5888;">:markdownvideo</div>
<div class="t" style="left:384.15px;top:1058.90px;font-size:44.40px;letter-spacing:0.526px;color:#b8812d;-webkit-text-stroke:0.35px #b8812d;">:marked</div>
<div class="t" style="left:151.20px;top:1122.05px;font-size:28.50px;letter-spacing:0.598px;color:#3e8d88;-webkit-text-stroke:0.35px #3e8d88;">:medical</div>
<div class="t" style="left:272.86px;top:1124.50px;font-size:25.60px;letter-spacing:0.208px;color:#3b5888;-webkit-text-stroke:0.35px #3b5888;">:oracle</div>
<div class="t" style="left:363.80px;top:1122.05px;font-size:28.50px;letter-spacing:0.563px;color:#3e8d88;-webkit-text-stroke:0.35px #3e8d88;">:oracle:benefits</div>
<div class="t" style="left:731.90px;top:252.90px;font-size:22.00px;letter-spacing:0.998px;color:#262626;">Name</div>
<div class="t" style="left:1338.80px;top:252.90px;font-size:22.00px;letter-spacing:0.460px;color:#262626;">Size</div>
<div class="t" style="left:775.92px;top:1142.50px;font-size:27.00px;letter-spacing:0.261px;color:#6e6e6e;-webkit-text-stroke:0.3px #6e6e6e;">Users</div>
<div class="t" style="left:919.59px;top:1142.50px;font-size:27.00px;letter-spacing:1.137px;color:#6e6e6e;-webkit-text-stroke:0.3px #6e6e6e;">ttscoff</div>
<div class="t" style="left:1066.79px;top:1142.50px;font-size:27.00px;letter-spacing:0.556px;color:#6e6e6e;-webkit-text-stroke:0.3px #6e6e6e;">Library</div>
<div class="t" style="left:1223.79px;top:1142.50px;font-size:27.00px;letter-spacing:0.234px;color:#6e6e6e;-webkit-text-stroke:0.3px #6e6e6e;">Metadata</div>
<div class="t" style="left:1410.35px;top:1142.50px;font-size:27.00px;letter-spacing:-0.759px;color:#6e6e6e;-webkit-text-stroke:0.3px #6e6e6e;">com.devon-</div>
<div class="t" style="left:1626.63px;top:1142.50px;font-size:27.00px;letter-spacing:0.405px;color:#6e6e6e;-webkit-text-stroke:0.3px #6e6e6e;">642545AA-8255-4BE0-892E-F3F953E10176</div>
<div class="t" style="left:2249.34px;top:1142.50px;font-size:27.00px;letter-spacing:-1.204px;color:#6e6e6e;-webkit-text-stroke:0.3px #6e6e6e;">13</div>
<div class="t" style="left:1548.59px;top:1142.20px;font-size:27.00px;letter-spacing:0.000px;color:#d2d2d0;">t</div>

</body></html>
